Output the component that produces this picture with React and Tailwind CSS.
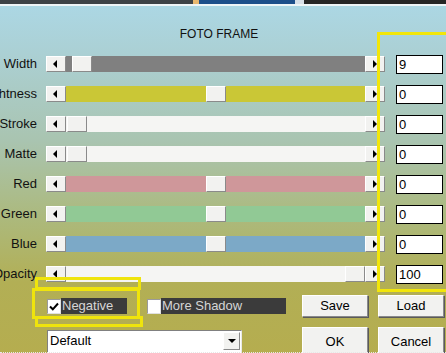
import React from 'react';

const rows = [
  { label: 'Width', track: 'bg-[#808080]', pos: 6, value: '9' },
  { label: 'Lightness', track: 'bg-[#cac736]', pos: 140, value: '0' },
  { label: 'Stroke', track: 'bg-[#f5f5f3]', pos: 1, value: '0' },
  { label: 'Matte', track: 'bg-[#f5f5f3]', pos: 1, value: '0' },
  { label: 'Red', track: 'bg-[#cf979a]', pos: 140, value: '0' },
  { label: 'Green', track: 'bg-[#91c995]', pos: 140, value: '0' },
  { label: 'Blue', track: 'bg-[#7ca9c7]', pos: 140, value: '0' },
  { label: 'Opacity', track: 'bg-[#f5f5f3]', pos: 279, value: '100' },
];

const raised = 'bg-[#f2f2f0] border border-t-white border-l-white border-r-[#8a8a8a] border-b-[#8a8a8a]';

const ArrowButton = ({ dir }) => (
  <div className={`w-[20px] h-[16px] flex items-center shrink-0 ${raised} ${dir === 'left' ? 'pl-[6px]' : 'pl-[7px]'}`}>
    {dir === 'left' ? (
      <div className="w-0 h-0 border-y-[4px] border-y-transparent border-r-[4px] border-r-black" />
    ) : (
      <div className="w-0 h-0 border-y-[4px] border-y-transparent border-l-[4px] border-l-black" />
    )}
  </div>
);

const SliderRow = ({ label, track, pos, value }) => (
  <div className="flex items-center h-[30px]">
    <div className="w-[37px] flex justify-end shrink-0">
      <span className="whitespace-nowrap text-[13px] text-[#111]">{label}</span>
    </div>
    <div className="w-[9px] shrink-0" />
    <ArrowButton dir="left" />
    <div className={`flex w-[299px] h-[16px] shrink-0 ${track}`}>
      <div className="shrink-0" style={{ width: pos }} />
      <div className={`w-[20px] h-[16px] shrink-0 ${raised}`} />
    </div>
    <ArrowButton dir="right" />
    <div className="w-[11px] shrink-0" />
    <div className="w-[47px] h-[19px] bg-white border border-black pl-[2px] text-[13px] leading-[17px] text-black shrink-0">
      {value}
    </div>
  </div>
);

const Check = ({ checked, label, width }) => (
  <div className="flex items-center h-[16px]">
    <div className="w-[14px] h-[15px] bg-white border border-t-[#9a9a9a] border-l-[#9a9a9a] border-r-[#e0e0e0] border-b-[#e0e0e0] flex items-center justify-center shrink-0">
      {checked && (
        <svg width="10" height="9" viewBox="0 0 10 9">
          <path d="M1 4.5 L3.8 7.3 L9 1.5" stroke="#000" strokeWidth="2" fill="none" />
        </svg>
      )}
    </div>
    <div className={`h-[16px] bg-[#3b3b3b] text-[#d6d6d6] text-[13px] leading-[16px] pl-[1px] whitespace-nowrap ${width}`}>
      {label}
    </div>
  </div>
);

const PushButton = ({ children, h = 'h-[22px]' }) => (
  <div className={`w-[66px] ${h} ${raised} shadow-[1px_1px_0_#5a5a5a] flex items-center justify-center text-[13px] text-black`}>
    {children}
  </div>
);

export default function App() {
  return (
    <div className="relative w-[446px] h-[353px] overflow-hidden font-['Liberation_Sans',Arial,sans-serif] bg-[linear-gradient(180deg,#acd8e6_0%,#abd0d4_15%,#a9c4b0_40%,#acb97c_62%,#b2af55_80%,#b5ad4f_100%)]">
      <div className="flex h-[4px]">
        <div className="w-[193px] bg-[#3d4246]" />
        <div className="w-[6px] bg-[#e8b870]" />
        <div className="w-[96px] bg-[#1d4f8a]" />
        <div className="w-[9px] bg-[#d8e0e8]" />
        <div className="flex-1 bg-[#262626]" />
      </div>
      <div className="h-[2px] bg-[#eef4f6]" />

      <div className="w-[438px] pt-[21px] h-[43px] text-center text-[12px] leading-[14px] text-[#111]">FOTO FRAME</div>

      <div className="flex flex-col">
        {rows.map(r => (
          <SliderRow key={r.label} {...r} />
        ))}
      </div>

      <div className="flex items-center mt-[6px] h-[22px] pl-[47px]">
        <Check checked label="Negative" width="w-[66px]" />
        <div className="w-[20px]" />
        <Check label="More Shadow" width="w-[125px]" />
        <div className="w-[16px]" />
        <PushButton>Save</PushButton>
        <div className="w-[10px]" />
        <PushButton>Load</PushButton>
      </div>

      <div className="flex items-start mt-[10px] pl-[47px]">
        <div className="mt-[3px] w-[195px] h-[24px] bg-white border border-t-[#808080] border-l-[#808080] border-r-[#e8e8e8] border-b-[#e8e8e8] flex items-start">
          <div className="flex-1 pl-[2px] text-[13px] leading-[20px] text-black">Default</div>
          <div className={`w-[17px] h-[18px] mt-[1px] mr-[1px] ${raised} flex items-center justify-center`}>
            <div className="w-0 h-0 border-x-[4px] border-x-transparent border-t-[4px] border-t-black" />
          </div>
        </div>
        <div className="w-[60px]" />
        <PushButton h="h-[30px]">OK</PushButton>
        <div className="w-[10px]" />
        <PushButton h="h-[30px]">Cancel</PushButton>
      </div>

      <div className="absolute left-[377px] top-[32px] w-[90px] h-[260px] border-[3px] border-[#f2e60a]" />
      <div className="absolute left-[35px] top-[277px] w-[106px] h-[13px] border-[3px] border-[#efe40c]" />
      <div className="absolute left-[32px] top-[288px] w-[108px] h-[31px] border-[3px] border-[#efe40c]" />
      <div className="absolute left-[35px] top-[316px] w-[108px] h-[11px] border-[3px] border-[#efe40c]" />
      <div className="absolute left-0 bottom-0 w-full border-b border-dotted border-[#e8e8e8]" />
    </div>
  );
}
